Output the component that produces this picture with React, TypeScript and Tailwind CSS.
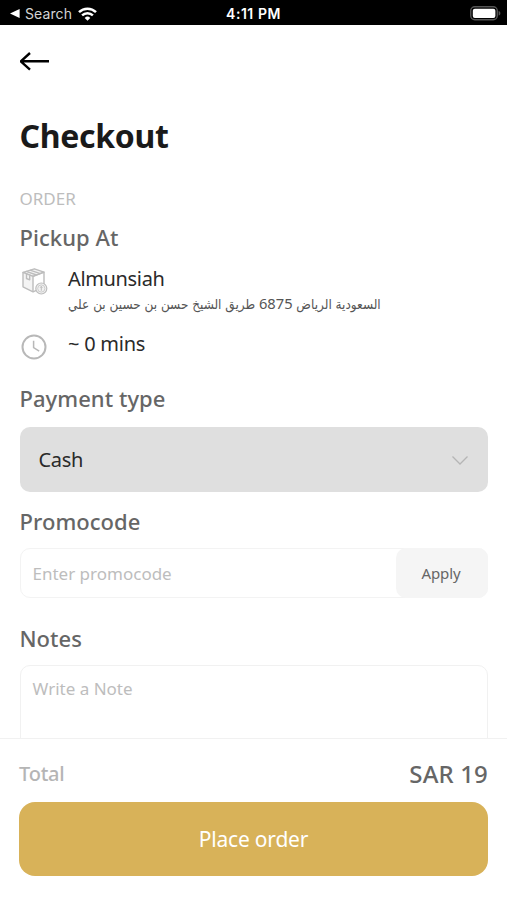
import React from 'react';

const StatusBar: React.FC = () => (
  <header className="grid h-[25px] shrink-0 grid-cols-3 items-center bg-black pl-[10px] pr-[6px] pt-[2px] font-['Inter','Liberation_Sans',sans-serif] text-white">
    <div className="flex items-center">
      <svg className="h-[9px] w-[10px]" viewBox="0 0 10 9" fill="currentColor">
        <path d="M0 4.5 9.6 0v9z" />
      </svg>
      <span className="ml-[5px] text-[14px] leading-5 tracking-[0.1px] text-[#d4d4d4]">Search</span>
      <svg className="ml-[6px] h-[14px] w-[19px]" viewBox="0 0 19 14" fill="none" stroke="currentColor" strokeWidth="2.5">
        <path d="M1 5.1a12.2 12.2 0 0 1 17 0" />
        <path d="M4.1 8.3a7.8 7.8 0 0 1 10.8 0" />
        <path d="M9.5 13.7 6.7 10.9a4 4 0 0 1 5.6 0z" fill="currentColor" stroke="none" />
      </svg>
    </div>
    <span className="-ml-[4px] text-center text-[14px] font-semibold leading-5 tracking-[0.55px]">4:11 PM</span>
    <svg className="h-[15px] w-[31px] justify-self-end" viewBox="0 0 31 15">
      <rect x="0.75" y="0.75" width="26.5" height="13" rx="4" fill="none" stroke="#555" strokeWidth="1.4" />
      <rect x="2.8" y="2.7" width="22.6" height="9.2" rx="2" fill="#fff" />
      <path d="M28.6 5v4.6c1.2-.4 1.8-1.2 1.8-2.3S29.8 5.4 28.6 5z" fill="#555" />
    </svg>
  </header>
);

const PackageIcon: React.FC = () => (
  <svg className="h-[28px] w-[28px]" viewBox="0 0 28 28" fill="none" stroke="#bdbdbd" strokeWidth="1.4" strokeLinejoin="round">
    <path d="M3 4.4 14.4.8 24 4.2 13 8.4z" fill="#f4f4f4" />
    <path d="M3 4.4v14.4l10 5V8.4z" fill="#f4f4f4" />
    <path d="M13 8.4 24 4.2V17M13 23.8l4.500-2" />
    <path d="M6.200 3.400 16.600 7M10 2.200 20.300 5.600M6.500 6v4.500l3.200 1.300V7.200" />
    <circle cx="21.300" cy="20.500" r="5.500" fill="#f1f1f1" strokeWidth="1.200" />
    <circle cx="21.300" cy="20.500" r="3.600" strokeWidth="0.700" />
    <path d="M21.300 18.400v4.400M20.200 19.700l1.100-1.300 1.100 1.300" strokeWidth="1" />
  </svg>
);

const ClockIcon: React.FC = () => (
  <svg className="h-[26px] w-[26px]" viewBox="0 0 26 26" fill="none" stroke="#b8b8b8">
    <circle cx="13" cy="13" r="11.5" strokeWidth="2" />
    <path d="M12.6 6.7v7l5.6 3.4" strokeWidth="1.5" />
  </svg>
);

interface HeadingProps {
  children: React.ReactNode;
}

const Heading: React.FC<HeadingProps> = ({ children }) => (
  <h2 className="text-[22px] font-medium leading-[30px] tracking-[0.05px] text-[#666]">{children}</h2>
);

export default function App() {
  return (
    <div className="flex h-[900px] w-[507px] flex-col overflow-hidden bg-white font-['Noto_Sans','DejaVu_Sans',sans-serif] text-[#2a2a2a]">
      <StatusBar />

      <main className="flex min-h-0 flex-1 flex-col overflow-hidden px-[19.5px]">
        <button className="mt-[26px] h-5 w-[30px] shrink-0" aria-label="Back">
          <svg className="h-5 w-[30px]" viewBox="0 0 30 20" fill="none" stroke="#000" strokeWidth="2.4" strokeLinejoin="round">
            <path d="M29 10.3H.8M10 2 .8 10.3l9.2 8.3" />
          </svg>
        </button>

        <h1 className="mt-[41px] text-[32px] font-bold leading-[48px] tracking-[-0.3px] text-[#1a1a1a]">Checkout</h1>

        <p className="mt-[28px] text-[17px] leading-[22px] text-[#bdbdbd]">ORDER</p>
        <div className="mt-[12px]">
          <Heading>Pickup At</Heading>
        </div>

        <div className="mt-[12px] flex">
          <div className="w-[48.5px] pt-[4px]">
            <PackageIcon />
          </div>
          <div>
            <p className="text-[20px] leading-[30px] tracking-[-0.35px]">Almunsiah</p>
            <p
              dir="rtl"
              className="font-['DejaVu_Sans_Condensed','DejaVu_Sans',sans-serif] text-[13.45px] leading-[22px] text-[#555]"
            >
              السعودية الرياض <span className="font-['Noto_Sans',sans-serif] text-[14.7px] leading-none">6875</span> طريق الشيخ حسن بن حسين بن علي
            </p>
          </div>
        </div>
        <div className="mt-[13px] flex">
          <div className="w-[48.5px] pl-[1px] pt-[5px]">
            <ClockIcon />
          </div>
          <p className="text-[20px] leading-[30px] tracking-[-0.25px]">~ 0 mins</p>
        </div>

        <div className="mt-[23px]">
          <Heading>Payment type</Heading>
        </div>
        <button className="mt-[14px] flex h-[65px] shrink-0 items-center justify-between rounded-[10px] bg-[#dfdfdf] pl-[19px] pr-[20px]">
          <span className="pt-px text-[20px] leading-[30px] tracking-[-0.3px]">Cash</span>
          <svg className="h-[10px] w-[16px]" viewBox="0 0 16 10" fill="none" stroke="#b5b5b5" strokeWidth="1.3">
            <path d="M.5 1.500 8 9 15.500 1.500" />
          </svg>
        </button>

        <div className="mt-[14px]">
          <Heading>Promocode</Heading>
        </div>
        <div className="mt-3 flex h-[50px] shrink-0 rounded-[10px] border border-[#f3f3f3]">
          <span className="flex-1 pl-3 text-[17px] leading-[49px] text-[#bdbdbd]">Enter promocode</span>
          <button className="-my-px -mr-px w-[92px] rounded-[10px] bg-[#f5f5f5] pr-px text-[15px] tracking-[-0.1px] text-[#666]">
            Apply
          </button>
        </div>

        <div className="mt-[25px]">
          <Heading>Notes</Heading>
        </div>
        <div className="mt-3 h-[110px] shrink-0 rounded-[10px] border border-[#f1f1f1] px-3 pt-[12px] text-[17px] leading-[22px] text-[#bdbdbd]">
          Write a Note
        </div>
      </main>

      <footer className="h-[162px] shrink-0 border-t border-[#f1f1f1] bg-white px-[19px]">
        <div className="flex h-[70px] items-center justify-between">
          <span className="text-[20px] font-medium tracking-[-0.2px] text-[#b5b5b5]">Total</span>
          <span className="text-[24px] font-medium tracking-[0.15px] text-[#666]">SAR 19</span>
        </div>
        <button className="mt-[-7px] flex h-[73.5px] w-full items-center justify-center rounded-[16px] bg-[#d8b259] pt-px text-[21px] tracking-[-0.2px] text-white">
          Place order
        </button>
      </footer>
    </div>
  );
}
